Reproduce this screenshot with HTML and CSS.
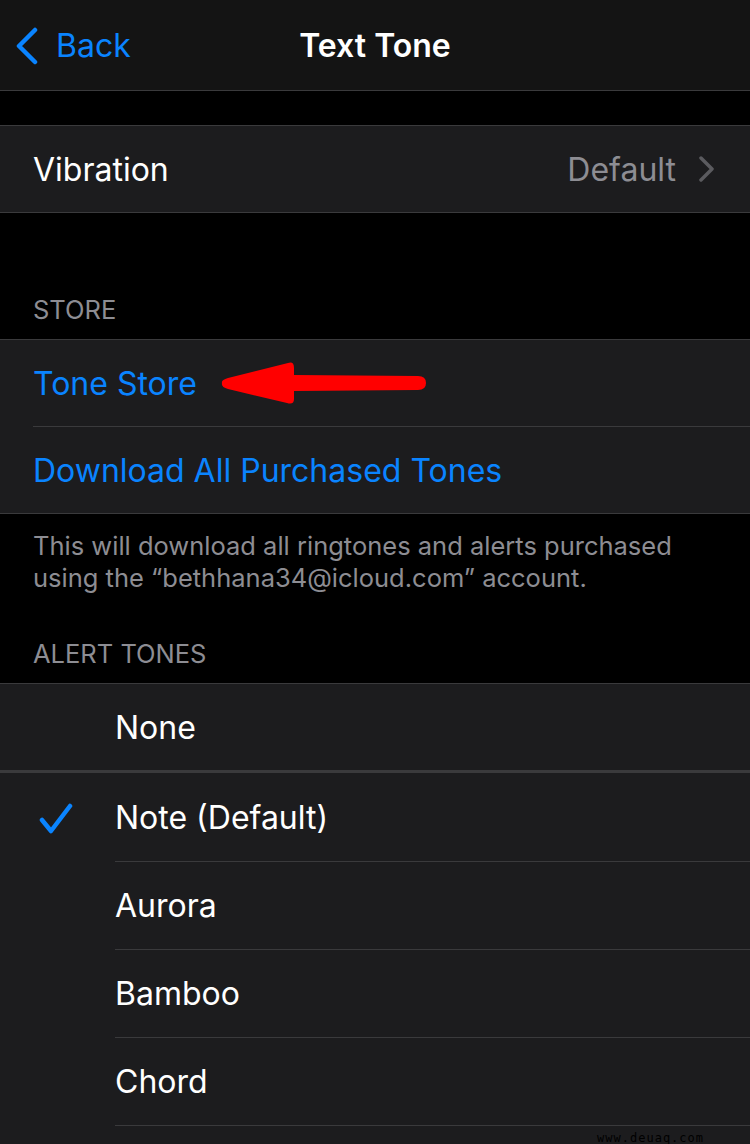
FILE: index.html
```html
<!DOCTYPE html>
<html lang="en">

<head>
    <meta charset="UTF-8">
    <meta name="viewport" content="width=device-width, initial-scale=1.0">
    <title>Text Tone</title>
    <link rel="stylesheet" href="styles.css">
</head>

<body>
    <div class="screen">
        <div class="navbar">
            <div class="back">
                <svg class="back-chevron" width="26" height="38" viewBox="0 0 26 38">
                    <path d="M21 3 L5 19 L21 35" fill="none" stroke="#0a84ff" stroke-width="4.5" stroke-linecap="round" stroke-linejoin="round"/>
                </svg>
                <span>Back</span>
            </div>
            <h1 class="title">Text Tone</h1>
        </div>

        <div class="group first">
            <div class="row">
                <span class="label">Vibration</span>
                <span class="value">Default</span>
                <svg class="disclosure" width="18" height="26" viewBox="0 0 18 26">
                    <path d="M3 2 L14 13 L3 24" fill="none" stroke="#5b5b5f" stroke-width="3.5" stroke-linecap="round" stroke-linejoin="round"/>
                </svg>
            </div>
        </div>

        <div class="section-header store-header">STORE</div>
        <div class="group">
            <div class="row link has-arrow">
                <span class="label">Tone Store</span>
                <svg class="red-arrow" width="212" height="46" viewBox="0 0 212 46">
                    <path d="M4 23 Q3 20 10 18 L70 3 Q76 1 76 8 L76 15 L200 16 Q208 16 208 23 Q208 30 200 30 L76 31 L76 39 Q76 45 69 43 L10 29 Q3 27 4 23 Z" fill="#ff0000"/>
                </svg>
            </div>
            <div class="row link">
                <span class="label">Download All Purchased Tones</span>
            </div>
        </div>
        <p class="section-footer">This will download all ringtones and alerts purchased using the “bethhana34@icloud.com” account.</p>

        <div class="section-header">ALERT TONES</div>
        <div class="group tones">
            <div class="row tone none-row">
                <span class="check"></span>
                <span class="label">None</span>
            </div>
            <div class="row tone">
                <span class="check">
                    <svg width="34" height="32" viewBox="0 0 34 32">
                        <path d="M3 17 L12 28 L31 3" fill="none" stroke="#0a84ff" stroke-width="4.5" stroke-linecap="round" stroke-linejoin="round"/>
                    </svg>
                </span>
                <span class="label">Note (Default)</span>
            </div>
            <div class="row tone">
                <span class="check"></span>
                <span class="label">Aurora</span>
            </div>
            <div class="row tone">
                <span class="check"></span>
                <span class="label">Bamboo</span>
            </div>
            <div class="row tone">
                <span class="check"></span>
                <span class="label">Chord</span>
            </div>
            <div class="row tone partial">
                <span class="watermark">www.deuaq.com</span>
            </div>
        </div>
    </div>
</body>

</html>
```

FILE: styles.css
```css
body {
    margin: 0;
    padding: 0;
    background-color: #000;
    font-family: Inter, "Noto Sans", sans-serif;
    color: #fff;
}

.screen {
    width: 750px;
    height: 1144px;
    overflow: hidden;
    background-color: #000;
}

.navbar {
    position: relative;
    height: 90px;
    background-color: #141414;
    border-bottom: 1px solid #3a3a3c;
    display: flex;
    align-items: center;
    justify-content: center;
}

.back {
    position: absolute;
    left: 14px;
    top: 26px;
    display: flex;
    align-items: center;
    gap: 16px;
    color: #0a84ff;
    font-size: 32px;
}

.title {
    margin: 0;
    font-size: 32px;
    font-weight: 600;
}

.group {
    background-color: #1c1c1e;
    border-top: 1px solid #3a3a3c;
    border-bottom: 1px solid #3a3a3c;
}

.group.first {
    margin-top: 34px;
}

.row {
    position: relative;
    height: 86px;
    display: flex;
    align-items: center;
    padding-left: 33px;
    padding-right: 34px;
    font-size: 32px;
}

.row + .row::before {
    content: "";
    position: absolute;
    top: -1px;
    left: 33px;
    right: 0;
    height: 1px;
    background-color: #3a3a3c;
}

.row + .row {
    margin-top: 1px;
}

.row .label {
    flex: 1;
}

.row .value {
    color: #8d8d93;
    margin-right: 22px;
}

.link .label {
    flex: none;
    color: #0a84ff;
}

.red-arrow {
    position: absolute;
    left: 218px;
    top: 20px;
}

.section-header {
    padding: 0 33px;
    font-size: 25.5px;
    color: #8d8d93;
    height: 44px;
    line-height: 30px;
}

.store-header {
    margin-top: 82px;
}

.section-footer {
    margin: 0;
    padding: 16px 33px 0 33px;
    height: 125px;
    font-size: 25.5px;
    line-height: 32px;
    color: #8d8d93;
    box-sizing: border-box;
}

.tones .row {
    padding-left: 0;
    height: 87px;
}

.tones .row.none-row {
    height: 86px;
}

.tones .check {
    width: 115px;
    display: flex;
    justify-content: center;
    padding-right: 4px;
    box-sizing: border-box;
    padding-top: 2px;
}

.tones .row + .row::before {
    left: 115px;
}

.tones .none-row {
    border-bottom: 3px solid #3a3a3c;
}

.tones .none-row + .row::before {
    display: none;
}

.tones .row.partial {
    height: 20px;
    align-items: flex-end;
    justify-content: flex-end;
}

.watermark {
    font-family: "DejaVu Sans Mono", monospace;
    font-size: 12px;
    color: #000;
    margin-right: 12px;
    margin-bottom: 1px;
    letter-spacing: 1px;
}
```
